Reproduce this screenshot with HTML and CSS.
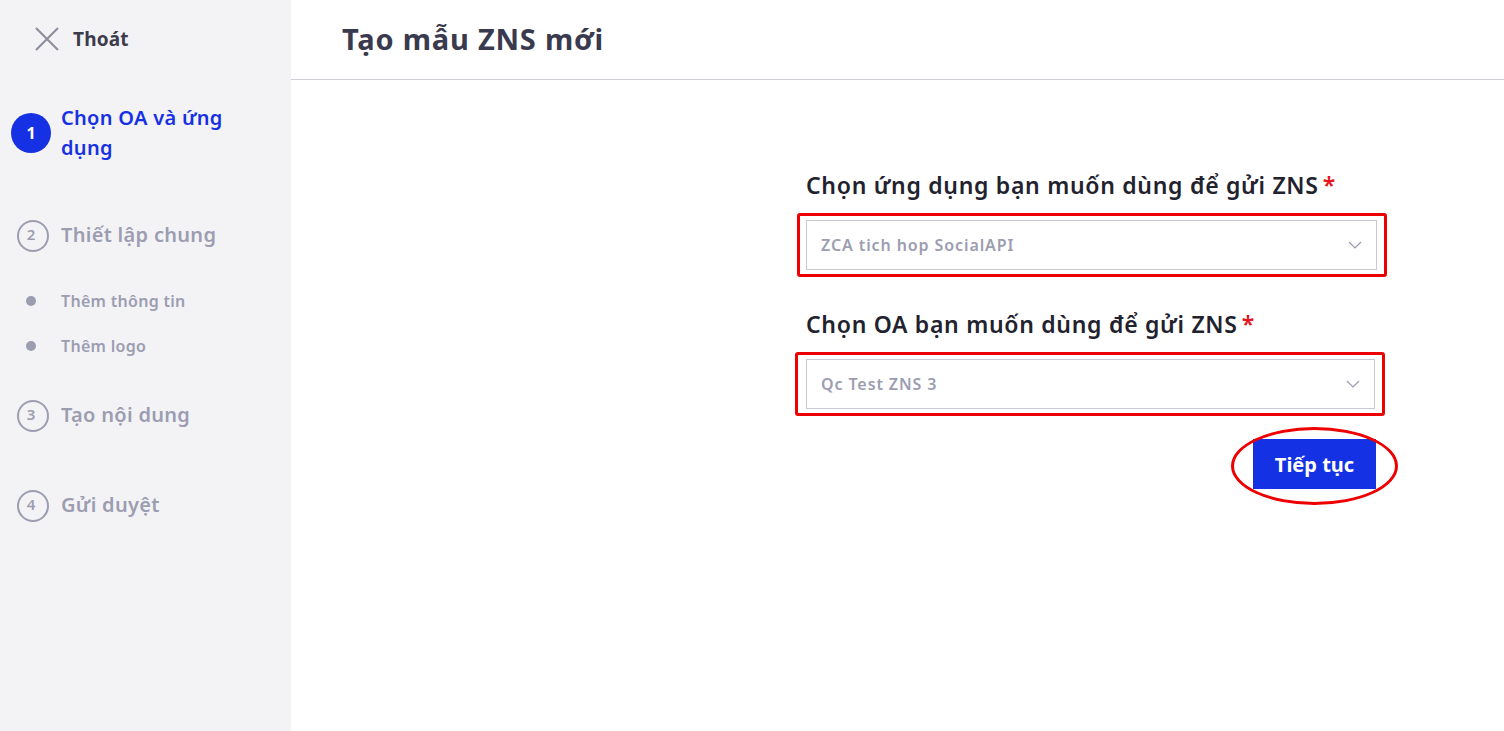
FILE: index.html
```html
<!DOCTYPE html>
<html lang="vi">
<head>
<meta charset="utf-8">
<title>Tạo mẫu ZNS mới</title>
<link rel="stylesheet" href="styles.css">
</head>
<body>
<div class="app">
  <aside class="sidebar">
    <div class="exit">
      <svg class="exit-icon" width="24" height="24" viewBox="0 0 24 24"><path d="M1 1L23 23M23 1L1 23" stroke="#8e8f9e" stroke-width="2.2" fill="none"/></svg>
      <span>Thoát</span>
    </div>
    <ol class="steps">
      <li class="step active">
        <span class="num">1</span>
        <span class="label">Chọn OA và ứng dụng</span>
      </li>
      <li class="step step-2">
        <span class="num">2</span>
        <span class="label">Thiết lập chung</span>
      </li>
      <li class="sub">
        <span class="dot"></span><span>Thêm thông tin</span>
      </li>
      <li class="sub">
        <span class="dot"></span><span>Thêm logo</span>
      </li>
      <li class="step step-3">
        <span class="num">3</span>
        <span class="label">Tạo nội dung</span>
      </li>
      <li class="step step-4">
        <span class="num">4</span>
        <span class="label">Gửi duyệt</span>
      </li>
    </ol>
  </aside>
  <main class="main">
    <header class="header">
      <h1>Tạo mẫu ZNS mới</h1>
    </header>
    <section class="content">
      <form class="form">
        <div class="field field-1">
          <label>Chọn ứng dụng bạn muốn dùng để gửi ZNS<span class="req">*</span></label>
          <div class="highlight hl-1">
            <div class="select">
              <span>ZCA tich hop SocialAPI</span>
              <svg width="14" height="8" viewBox="0 0 14 8"><path d="M1 1L7 7L13 1" stroke="#9a9bb0" stroke-width="1.2" fill="none"/></svg>
            </div>
          </div>
        </div>
        <div class="field field-2">
          <label>Chọn OA bạn muốn dùng để gửi ZNS<span class="req">*</span></label>
          <div class="highlight hl-2">
            <div class="select">
              <span>Qc Test ZNS 3</span>
              <svg width="14" height="8" viewBox="0 0 14 8"><path d="M1 1L7 7L13 1" stroke="#9a9bb0" stroke-width="1.2" fill="none"/></svg>
            </div>
          </div>
        </div>
        <div class="actions">
          <div class="btn-wrap">
            <button type="button" class="btn">Tiếp tục</button>
            <span class="ellipse"></span>
          </div>
        </div>
      </form>
    </section>
  </main>
</div>
</body>
</html>
```
FILE: styles.css
```css
* { box-sizing: border-box; }
html, body { margin: 0; padding: 0; }
body {
  font-family: "Noto Sans", "Open Sans", sans-serif;
  background: #fff;
  width: 1504px;
  height: 731px;
  overflow: hidden;
}
.app { display: flex; height: 731px; }
.sidebar {
  width: 291px;
  flex: none;
  background: #f3f3f6;
  padding: 27px 0 0 0;
}
.exit {
  display: flex;
  align-items: center;
  gap: 14px;
  padding-left: 35px;
  height: 24px;
  font-size: 19px;
  font-weight: 700;
  color: #3c3c4c;
  letter-spacing: 0.2px;
}
.exit-icon { display: block; }
.steps { list-style: none; margin: 0; padding: 0; }
.step {
  display: flex;
  align-items: center;
  padding-left: 11px;
  font-size: 20px;
  font-weight: 600;
  color: #9c9db1;
  letter-spacing: 0.3px;
}
.step .num {
  width: 40px;
  display: flex;
  justify-content: center;
  align-items: center;
  flex: none;
  letter-spacing: 0;
}
.step .label { margin-left: 10px; }
.step.active {
  margin-top: 52px;
  color: #1630e4;
  line-height: 30px;
  align-items: center;
}
.step.active .num {
  height: 40px;
  border-radius: 50%;
  background: #1630e4;
  color: #fff;
  font-size: 16px;
  font-weight: 700;
}
.step.active .label { width: 175px; }
.step-2, .step-3, .step-4 { height: 40px; }
.step-2 .num, .step-3 .num, .step-4 .num {
  position: relative;
  font-size: 15px;
  height: 28px;
}
.step-2 .num::before, .step-3 .num::before, .step-4 .num::before {
  content: "";
  position: absolute;
  left: 6px;
  top: 0;
  width: 28px;
  height: 28px;
  border: 2px solid #9c9db1;
  border-radius: 50%;
}
.step-2 { margin-top: 51px; }
.sub {
  display: flex;
  align-items: center;
  padding-left: 26px;
  font-size: 16px;
  font-weight: 600;
  color: #9c9db1;
  height: 24px;
  letter-spacing: 0.3px;
}
.step-2 + .sub { margin-top: 35px; }
.sub + .sub { margin-top: 21px; }
.sub .dot {
  width: 10px;
  height: 10px;
  border-radius: 50%;
  background: #9c9db1;
  margin-right: 25px;
}
.step-3 { margin-top: 36px; }
.step-4 { margin-top: 50px; }
.main { flex: 1; display: flex; flex-direction: column; }
.header {
  height: 80px;
  border-bottom: 1px solid #cfcfd6;
  padding-left: 51px;
  display: flex;
  align-items: center;
}
.header h1 {
  margin: 0 0 2px 0;
  font-size: 29px;
  font-weight: 700;
  color: #3a3a4e;
  letter-spacing: 0.8px;
}
.content { padding-left: 504px; padding-top: 90px; }
.form { width: 595px; }
.field label {
  display: block;
  padding-left: 11px;
  font-size: 23px;
  font-weight: 600;
  color: #22222e;
  line-height: 30px;
  letter-spacing: 0.7px;
}
.req { color: #e8141b; margin-left: 4px; }
.highlight {
  border: 3px solid #ee0000;
  border-radius: 3px;
  padding: 4px 7px 4px 6px;
}
.hl-1 { margin-top: 13px; margin-left: 2px; width: 590px; }
.hl-2 { margin-top: 13px; width: 590px; }
.field-2 { margin-top: 32px; }
.select {
  height: 50px;
  border: 1px solid #c9c9d2;
  background: #fff;
  display: flex;
  align-items: center;
  justify-content: space-between;
  padding: 0 14px 0 14px;
  font-size: 16px;
  font-weight: 600;
  color: #9c9db1;
  letter-spacing: 0.9px;
}
.hl-2 .select { margin-left: 2px; }
.actions {
  display: flex;
  justify-content: flex-end;
  padding-right: 14px;
  margin-top: 23px;
}
.btn-wrap { position: relative; }
.btn {
  width: 123px;
  height: 50px;
  border: none;
  background: #1432e4;
  color: #fff;
  font-family: inherit;
  font-size: 20px;
  font-weight: 700;
  cursor: pointer;
}
.ellipse {
  position: absolute;
  left: -22px;
  top: -12px;
  width: 167px;
  height: 78px;
  border: 3px solid #ee0000;
  border-radius: 50%;
  pointer-events: none;
}
```
